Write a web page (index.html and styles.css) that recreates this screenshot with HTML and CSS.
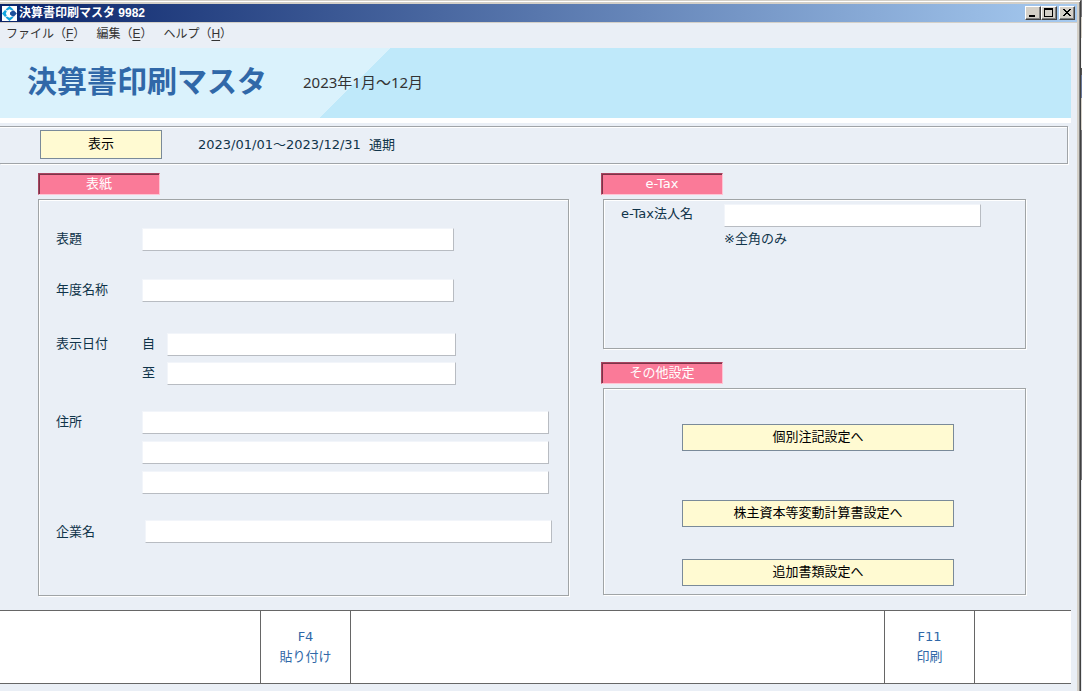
FILE: index.html
```html
<!DOCTYPE html>
<html lang="ja">
<head>
<meta charset="utf-8">
<title>決算書印刷マスタ 9982</title>
<link rel="stylesheet" href="styles.css">
</head>
<body>
<div class="window">
  <header class="titlebar">
    <svg class="app-icon" viewBox="0 0 15 15" aria-hidden="true">
      <rect width="15" height="15" fill="#fff"/>
      <path d="M3.500 3.500 7.500 0 11.500 3.500 10 4.500 7.500 3.200 5 4.500z" fill="#12a5e0"/>
      <path d="M3.500 11.500 7.500 15 11.500 11.500 10 10.500 7.500 11.800 5 10.500z" fill="#12a5e0"/>
      <path d="M3 4 4.800 5.200 3.800 7.500 4.800 9.800 3 11 0 7.500z" fill="#12a5e0"/>
      <path d="M10.500 4.500H12L14.800 7.500 12 10.500H10.500L8 8.500v-2z" fill="#1d4f9c"/>
    </svg>
    <span class="titlebar-text">決算書印刷マスタ 9982</span>
    <div class="window-buttons">
      <button type="button" aria-label="最小化"><svg viewBox="0 0 12 10"><path d="M2 7h6v2H2z"/></svg></button>
      <button type="button" aria-label="最大化"><svg viewBox="0 0 12 10"><path d="M1 0h9v9H1zM2 2v6h7V2z" fill-rule="evenodd"/></svg></button>
      <button type="button" class="close" aria-label="閉じる"><svg viewBox="0 0 12 10"><path d="M2 1h2v1h1v1h2V2h1V1h2v1H9v1H8v1H7v1h1v1h1v1h1v1H8V7H7V6H5v1H4v1H2V7h1V6h1V5h1V4H4V3H3V2H2z"/></svg></button>
    </div>
  </header>
  <div class="client">
    <nav class="menu">
      <button type="button">ファイル（<u>F</u>）</button>
      <button type="button">編集（<u>E</u>）</button>
      <button type="button">ヘルプ（<u>H</u>）</button>
    </nav>
    <div class="banner">
      <h1>決算書印刷マスタ</h1>
      <p>2023年1月～12月</p>
    </div>
    <div class="period">
      <button type="button" class="action">表示</button>
      <span class="period-text">2023/01/01～2023/12/31&nbsp; 通期</span>
    </div>
    <main class="columns">
      <section class="column">
        <h2 class="tag">表紙</h2>
        <form class="panel cover">
          <div class="field">
            <label for="subject">表題</label>
            <input id="subject" type="text" class="w-medium">
          </div>
          <div class="field year">
            <label for="year">年度名称</label>
            <input id="year" type="text" class="w-medium">
          </div>
          <div class="field dates">
            <span class="caption">表示日付</span>
            <div class="stack">
              <div class="line"><label for="from">自</label><input id="from" type="text" class="w-date"></div>
              <div class="line"><label for="to">至</label><input id="to" type="text" class="w-date"></div>
            </div>
          </div>
          <div class="field">
            <label for="address1">住所</label>
            <div class="stack address">
              <input id="address1" type="text" class="w-long">
              <input type="text" class="w-long" aria-label="住所2">
              <input type="text" class="w-long" aria-label="住所3">
            </div>
          </div>
          <div class="field company">
            <label for="company">企業名</label>
            <input id="company" type="text" class="w-long">
          </div>
        </form>
      </section>
      <div class="column side">
        <section>
          <h2 class="tag">e-Tax</h2>
          <div class="panel etax">
            <label for="corp">e-Tax法人名</label>
            <div class="etax-entry">
              <input id="corp" type="text">
              <span>※全角のみ</span>
            </div>
          </div>
        </section>
        <section class="other">
          <h2 class="tag">その他設定</h2>
          <div class="panel links">
            <button type="button" class="action">個別注記設定へ</button>
            <button type="button" class="action equity">株主資本等変動計算書設定へ</button>
            <button type="button" class="action">追加書類設定へ</button>
          </div>
        </section>
      </div>
    </main>
    <footer class="keys">
      <div class="key-space lead"></div>
      <button type="button" class="key">F4<br>貼り付け</button>
      <div class="key-space"></div>
      <button type="button" class="key">F11<br>印刷</button>
      <div class="key-space tail"></div>
    </footer>
  </div>
</div>
</body>
</html>
```
FILE: styles.css
```css
* {
  box-sizing: border-box;
}

body {
  margin: 0;
  min-height: 100vh;
  padding-right: 1px;
  display: flex;
  background: linear-gradient(#77777a 17px, #d4d0c8 17px 38px, #f4f4f4 38px 68px, #555 68px 75px, #6b7a9c 75px 98px, #d4d0c8 98px 130px, #77777a 130px 480px, #e4e6ea 480px);
  font: 13px/20px "DejaVu Sans", "Noto Sans CJK JP", sans-serif;
  color: #10344a;
}

button,
input {
  font: inherit;
  color: inherit;
  margin: 0;
}

.window {
  flex: 1;
  min-width: 0;
  display: flex;
  flex-direction: column;
  padding-top: 2px;
  border-top: 1px solid #d4d0c8;
  border-right: 1px solid #404040;
  background: #d4d0c8;
  box-shadow: inset 0 1px #fff, inset -1px 0 #808080;
}

.titlebar {
  display: flex;
  align-items: center;
  height: 19px;
  margin: 1px 3px 0 0;
  padding: 0 2px;
  border-bottom: 1px solid #d4d0c8;
  background: linear-gradient(90deg, #0a246a, #a6caf0);
  color: #fff;
}

.app-icon {
  width: 15px;
  height: 15px;
  margin-right: 2px;
}

.titlebar-text {
  flex: 1;
  font: bold 12px/18px "Liberation Sans", "Noto Sans CJK JP", sans-serif;
}

.window-buttons {
  display: flex;
}

.window-buttons button {
  display: flex;
  width: 16px;
  height: 14px;
  padding: 1px;
  border: 1px solid;
  border-color: #fff #404040 #404040 #fff;
  background: #d4d0c8;
  box-shadow: inset -1px -1px #808080;
}

.window-buttons .close {
  margin-left: 2px;
}

.window-buttons svg {
  width: 12px;
  height: 10px;
  fill: #000;
}

.client {
  flex: 1;
  margin-right: 3px;
  padding-right: 6px;
  background: #eaeff6;
}

.menu {
  display: flex;
  align-items: flex-start;
  gap: 11px;
  height: 25px;
  padding-left: 6px;
}

.menu button {
  padding: 0;
  border: 0;
  background: none;
  font: 12px/22px "Liberation Sans", "Noto Sans CJK JP", sans-serif;
  color: #333;
}

.menu u {
  text-underline-offset: 2px;
}

.banner {
  display: flex;
  align-items: center;
  gap: 36px;
  height: 75px;
  padding: 0 0 2px 27px;
  border-bottom: 5px solid #fff;
  background:
    linear-gradient(to bottom right, #daf2fc 50%, #bfe9fa 50%) 319px 0 / 72px 100% no-repeat,
    linear-gradient(#daf2fc, #daf2fc) 0 0 / 319px 100% no-repeat,
    #bfe9fa;
}

.banner h1 {
  margin: 0;
  padding-bottom: 6px;
  font: bold 30px/60px "Noto Sans CJK JP", sans-serif;
  color: #3068a8;
}

.banner p {
  margin: 0;
  font: 15px/20px "Noto Sans", "Noto Sans CJK JP", sans-serif;
  color: #333;
}

.period {
  display: flex;
  align-items: center;
  gap: 36px;
  margin: 3px 3px 0 0;
  padding: 3px 0 4px 40px;
  border: 1px solid #a0a4a8;
  border-left: 0;
  box-shadow: 1px 1px #fff, inset 0 1px #fff;
}

.action {
  height: 27px;
  padding: 0 0 2px;
  border: 1px solid #7a8a99;
  background: #fffad2;
  color: #000;
}

.period .action {
  width: 122px;
  height: 29px;
}

.columns {
  display: grid;
  grid-template-columns: 531fr 425fr;
  gap: 32px;
  padding: 9px 45px 0 38px;
}

.tag {
  width: 122px;
  height: 22px;
  margin: 0 0 4px;
  border: 1px solid;
  border-color: #a84460 #ffc4d4 #ffc4d4 #a84460;
  box-shadow: inset 1px 1px #7c3448;
  background: #fa7a98;
  font-size: 13px;
  font-weight: normal;
  line-height: 20px;
  text-align: center;
  color: #fff;
}

.panel {
  border: 1px solid #a0a4a6;
  box-shadow: 1px 1px #fff, inset 1px 1px #fff;
}

.panel input {
  width: 100%;
  height: 23px;
  padding: 0 4px;
  border: 1px solid;
  border-color: #f2f5fa #b8bcc2 #b8bcc2 #f2f5fa;
  background: #fff;
}

.cover {
  display: flex;
  flex-direction: column;
  gap: 26px;
  padding: 28px 17px 52px;
  line-height: 22px;
}

.field {
  display: grid;
  grid-template-columns: 86px 1fr;
}

.year {
  margin-top: 2px;
}

.dates {
  margin-top: 5px;
}

.company {
  grid-template-columns: 89px 1fr;
  align-items: end;
  margin-right: -3px;
}

.stack {
  display: flex;
  flex-direction: column;
  gap: 6px;
}

.address {
  gap: 7px;
}

.line {
  display: grid;
  grid-template-columns: 25px 1fr;
}

.cover .w-medium {
  max-width: 312px;
}

.cover .w-date {
  max-width: 289px;
}

.cover .w-long {
  max-width: 407px;
}

.side .panel {
  margin-left: 2px;
}

.etax {
  display: grid;
  grid-template-columns: 103px 1fr;
  min-height: 150px;
  padding: 4px 44px 0 17px;
}

.etax-entry {
  display: flex;
  flex-direction: column;
  gap: 2px;
}

.other {
  margin-top: 13px;
}

.links {
  display: flex;
  flex-direction: column;
  padding: 35px 71px 8px 78px;
}

.links .equity {
  margin: 49px 0 32px;
}

.keys {
  display: flex;
  height: 74px;
  margin-top: 14px;
  border: solid #666;
  border-width: 1px 0;
  background: #fff;
  color: #3068a8;
}

.key {
  width: 91px;
  padding: 0;
  border: solid #666;
  border-width: 0 1px;
  background: #fff;
}

.key-space {
  flex: 1;
}

.lead {
  flex: 0 1 260px;
}

.tail {
  flex: 0 1 96px;
}
```
